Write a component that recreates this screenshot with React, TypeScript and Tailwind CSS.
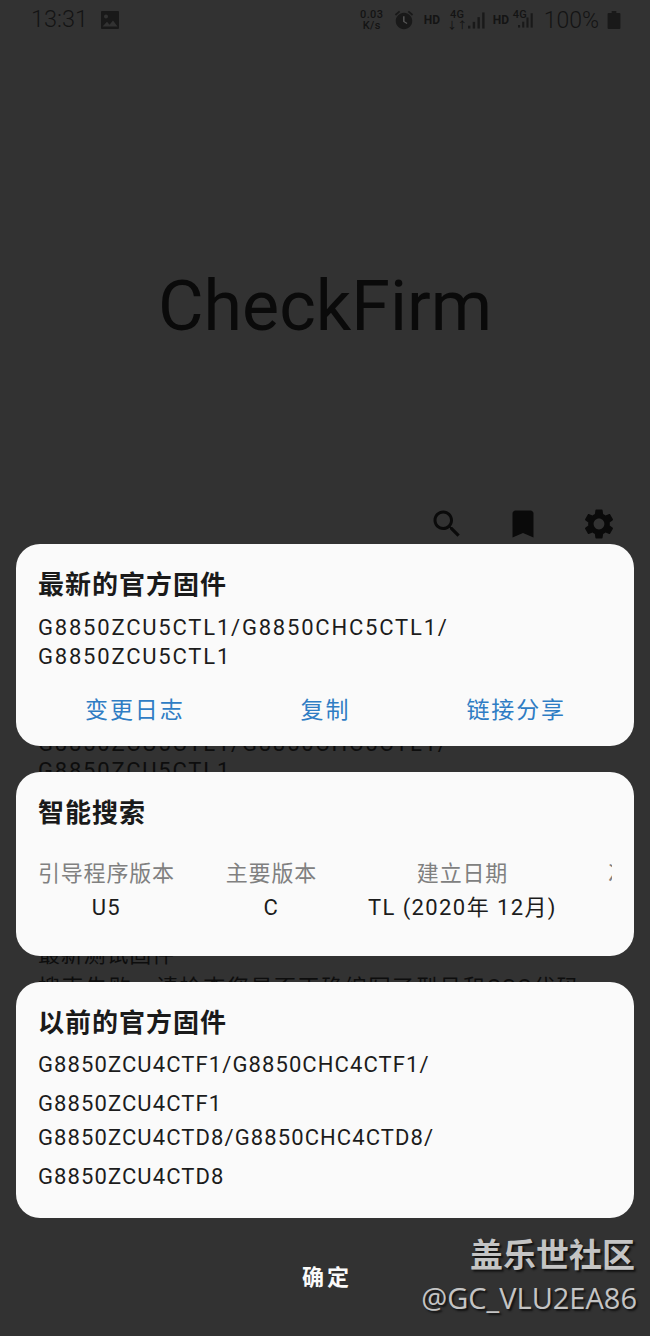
import React from "react";

const font = { fontFamily: 'Roboto, "Noto Sans CJK SC", sans-serif' };

function Bars({ w = 18 }: { w?: number }) {
  return (
    <svg width={w} height="20" viewBox="0 0 19 20" fill="#191919">
      <rect x="0" y="16" width="2.5" height="3" />
      <rect x="5" y="12" width="2.5" height="7" />
      <rect x="10" y="7" width="2.5" height="12" />
      <rect x="15" y="2" width="2.5" height="17" />
    </svg>
  );
}

function StatusBar() {
  return (
    <div className="h-[40px] flex items-center pl-[31px] pr-[29px] text-[#141414]">
      <span className="text-[23.5px] leading-none font-light">13:31</span>
      <svg className="ml-[12px]" width="20" height="20" viewBox="0 0 20 20" fill="#191919">
        <path d="M2 1h16a1 1 0 0 1 1 1v16a1 1 0 0 1-1 1H2a1 1 0 0 1-1-1V2a1 1 0 0 1 1-1zm.5 15.5h15l-4.5-6-3.5 4.2-2.5-3zM6 4.5a2 2 0 1 0 0 4 2 2 0 0 0 0-4z" fillRule="evenodd" />
      </svg>
      <div className="flex-1" />
      <div className="flex flex-col items-center text-[11px] leading-[11px] tracking-[0.4px] font-medium w-[24px]">
        <span>0.03</span>
        <span>K/s</span>
      </div>
      <svg className="ml-[9px]" width="22" height="22" viewBox="0 0 24 24" fill="#191919">
        <path d="M22 5.72l-4.6-3.86-1.29 1.53 4.6 3.86L22 5.72zM7.88 3.39L6.6 1.86 2 5.71l1.29 1.53 4.59-3.85zM12 4c-4.97 0-9 4.03-9 9s4.03 9 9 9 9-4.03 9-9-4.03-9-9-9z" />
        <path d="M12.6 8H11v6l4 2.4.7-1.2-3.1-1.9z" fill="#555" />
      </svg>
      <span className="ml-[9px] text-[12px] font-bold w-[16px]">HD</span>
      <div className="ml-[10px] flex flex-col items-center text-[11px] leading-[11px] tracking-[0.3px] font-medium w-[15px]">
        <span>4G</span>
        <span className="text-[10px]">↓↑</span>
      </div>
      <div className="ml-[3px] flex"><Bars /></div>
      <span className="ml-[7px] text-[12px] font-bold w-[15px]">HD</span>
      <span className="ml-[5px] text-[11px] leading-[11px] tracking-[0.3px] font-medium self-start mt-[9px] w-[13px]">4G</span>
      <div className="-ml-[8px] flex"><Bars w={16} /></div>
      <span className="ml-[10px] text-[23px] leading-none font-light">100%</span>
      <svg className="ml-[8px]" width="14" height="18" viewBox="0 0 12 18" fill="#191919" preserveAspectRatio="none">
        <path d="M4 0h4v2h2.5a1 1 0 0 1 1 1v14a1 1 0 0 1-1 1h-9a1 1 0 0 1-1-1V3a1 1 0 0 1 1-1H4z" />
      </svg>
    </div>
  );
}

function Toolbar() {
  return (
    <div className="mt-[158px] flex justify-end gap-[40px] pr-[33px]">
      <svg width="36" height="36" viewBox="0 0 24 24" fill="#0a0a0a">
        <path d="M15.5 14h-.79l-.28-.27C15.41 12.59 16 11.11 16 9.5 16 5.91 13.09 3 9.5 3S3 5.91 3 9.5 5.91 16 9.5 16c1.61 0 3.09-.59 4.23-1.57l.27.28v.79l5 4.99L20.49 19l-4.99-5zm-6 0C7.01 14 5 11.99 5 9.5S7.01 5 9.5 5 14 7.01 14 9.5 11.99 14 9.5 14z" />
      </svg>
      <svg width="36" height="36" viewBox="0 0 24 24" fill="#0a0a0a">
        <path d="M17 3H7c-1.1 0-1.99.9-1.99 2L5 21l7-3 7 3V5c0-1.1-.9-2-2-2z" />
      </svg>
      <svg width="36" height="36" viewBox="0 0 24 24" fill="#0a0a0a">
        <path d="M19.14 12.94c.04-.3.06-.61.06-.94 0-.32-.02-.64-.07-.94l2.03-1.58c.18-.14.23-.41.12-.61l-1.92-3.32c-.12-.22-.37-.29-.59-.22l-2.39.96c-.5-.38-1.03-.7-1.62-.94l-.36-2.54c-.04-.24-.24-.41-.48-.41h-3.84c-.24 0-.43.17-.47.41l-.36 2.54c-.59.24-1.13.57-1.62.94l-2.39-.96c-.22-.08-.47 0-.59.22L2.74 8.87c-.12.21-.08.47.12.61l2.03 1.58c-.05.3-.09.63-.09.94s.02.64.07.94l-2.03 1.58c-.18.14-.23.41-.12.61l1.92 3.32c.12.22.37.29.59.22l2.39-.96c.5.38 1.03.7 1.62.94l.36 2.54c.05.24.24.41.48.41h3.84c.24 0 .44-.17.47-.41l.36-2.54c.59-.24 1.13-.56 1.62-.94l2.39.96c.22.08.47 0 .59-.22l1.92-3.32c.12-.22.07-.47-.12-.61l-2.01-1.58zM12 15.6c-1.98 0-3.6-1.62-3.6-3.6s1.62-3.6 3.6-3.6 3.6 1.62 3.6 3.6-1.62 3.6-3.6 3.6z" />
      </svg>
    </div>
  );
}

const title = "text-[26px] leading-[34px] font-bold text-[#1a1a1a] tracking-[1px]";

function Col({ label, value }: { label: string; value: string }) {
  return (
    <div className="flex flex-col items-center shrink-0 whitespace-nowrap">
      <span className="text-[22px] leading-[32px] text-[#808080] tracking-[0.8px]">{label}</span>
      <span className="mt-[1px] text-[22px] leading-[34px] text-[#1c1c1c] tracking-[1.4px]">{value}</span>
    </div>
  );
}

export default function App() {
  return (
    <div className="w-[650px] h-[1336px] bg-[#323232] relative overflow-hidden" style={font}>
      <StatusBar />
      <div className="pt-[224px] text-center text-[70px] leading-[84px] text-[#0a0a0a]">CheckFirm</div>
      <Toolbar />

      <div className="mt-[2px] px-[16px]">
        <div className="h-[202px] rounded-[24px] bg-[#fafafa] pt-[24px] px-[22px]">
          <div className={title}>最新的官方固件</div>
          <div className="mt-[11px] text-[22px] leading-[29px] tracking-[1.8px] text-[#1c1c1c]">
            G8850ZCU5CTL1/G8850CHC5CTL1/
            <br />
            G8850ZCU5CTL1
          </div>
          <div className="mt-[23px] flex justify-between pl-[47px] pr-[46px] text-[23px] leading-[34px] tracking-[1.9px] text-[#2f7dc4]">
            <span>变更日志</span>
            <span>复制</span>
            <span>链接分享</span>
          </div>
        </div>
      </div>

      <div className="h-[26px] overflow-hidden px-[38px] whitespace-nowrap">
        <div className="-mt-[16px] text-[22px] leading-[27px] tracking-[1.8px] text-[#0d0d0d]">
          G8850ZCU5CTL1/G8850CHC5CTL1/
          <br />
          G8850ZCU5CTL1
        </div>
      </div>

      <div className="px-[16px]">
        <div className="h-[184px] rounded-[24px] bg-[#fafafa] pt-[24px] px-[22px]">
          <div className={title}>智能搜索</div>
          <div className="mt-[28px] flex gap-[51px] overflow-hidden">
            <Col label="引导程序版本" value="U5" />
            <Col label="主要版本" value="C" />
            <Col label="建立日期" value="TL (2020年 12月)" />
            <Col label="次要版本" value="" />
          </div>
        </div>
      </div>

      <div className="h-[26px] overflow-hidden px-[38px] whitespace-nowrap">
        <div className="-mt-[18px] text-[22px] leading-[33px] text-[#0d0d0d]">
          <div className="tracking-[0.8px]">最新测试固件</div>
          <div className="tracking-[1.6px]">搜索失败，请检查您是否正确编写了型号和CSC代码</div>
        </div>
      </div>

      <div className="px-[16px]">
        <div className="h-[236px] rounded-[24px] bg-[#fafafa] pt-[24px] px-[22px]">
          <div className={title}>以前的官方固件</div>
          <div className="mt-[6px] text-[22px] leading-[38.5px] tracking-[1.1px] text-[#1c1c1c]">
            <div>G8850ZCU4CTF1/G8850CHC4CTF1/</div>
            <div>G8850ZCU4CTF1</div>
            <div className="-mt-[4px]">G8850ZCU4CTD8/G8850CHC4CTD8/</div>
            <div>G8850ZCU4CTD8</div>
          </div>
        </div>
      </div>

      <div className="mt-[43px] pl-[4px] text-center text-[22px] leading-[34px] font-bold tracking-[3px] text-[#fafafa]">确定</div>

      <div className="absolute right-[13px] top-[1236px] flex flex-col items-end text-[#c4c4c4] [text-shadow:2px_2px_2px_#111]">
        <span className="mr-[2px] text-[33px] leading-[40px] font-bold">盖乐世社区</span>
        <span className="text-[29px] leading-[40px] mt-[2px]" style={{ fontFamily: '"Open Sans", sans-serif' }}>@GC_VLU2EA86</span>
      </div>
    </div>
  );
}
